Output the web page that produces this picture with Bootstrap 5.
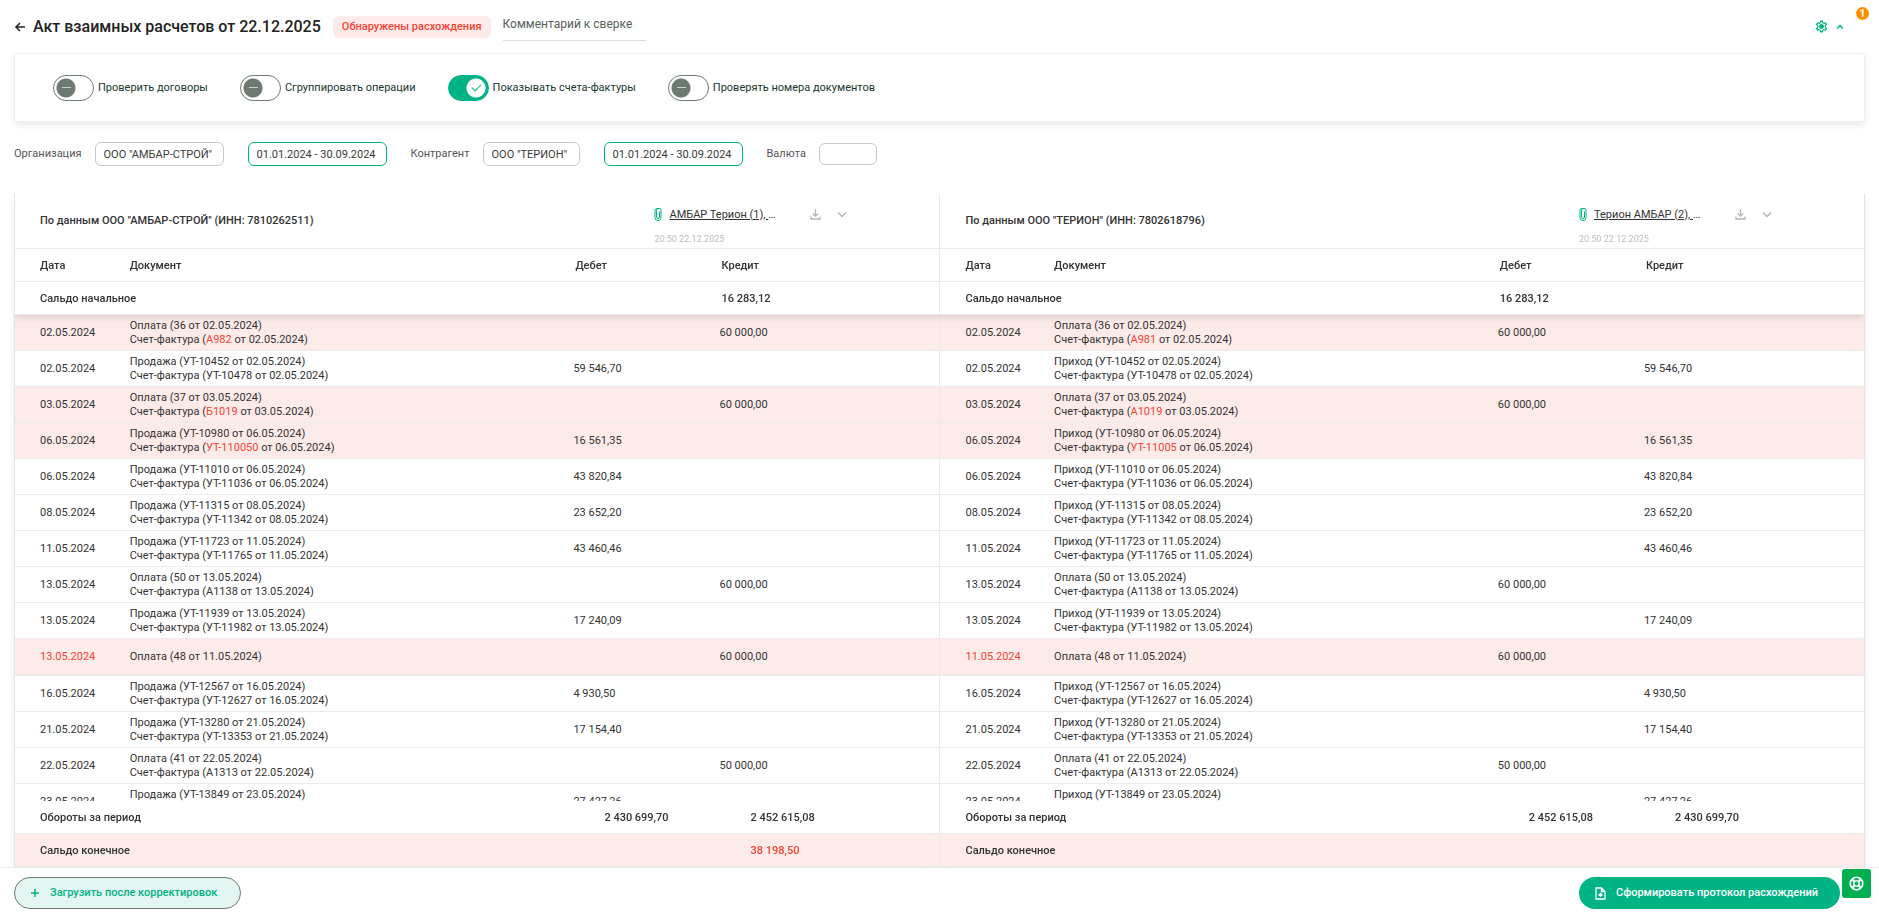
<!DOCTYPE html>
<html lang="ru">
<head>
<meta charset="utf-8">
<meta name="viewport" content="width=device-width, initial-scale=1">
<title>Акт взаимных расчетов</title>
<link rel="stylesheet" href="https://cdn.jsdelivr.net/npm/bootstrap@5.3.0/dist/css/bootstrap.min.css">
<style>
:root { --green: #00b383; --red: #f44336; --pink: #fdebe9; --line: #ebebeb; --ink: #333; }
body { font-family: Roboto, "Noto Sans", sans-serif; font-size: 11px; line-height: 14px; color: var(--ink); }
.page-head { height: 53px; padding: 0 35px 0 14px; }
.page-title { font-size: 16px; line-height: 20px; font-weight: 500; margin: 0 12px 0 7px; color: #222; }
.status-tag { background: var(--pink); color: var(--red); font-weight: 500; line-height: 22px; border-radius: 6px; padding: 0 9px; }
.note-input { width: 143px; height: 28px; margin-left: 12px; border: 0; border-bottom: 1px solid #ddd; padding: 0 0 4px; font-size: 12px; color: #4d5652; outline: 0; }
.note-input::placeholder { color: #56605b; opacity: 1; }
.alert-dot { position: absolute; top: 7px; right: 10px; width: 13px; height: 13px; border-radius: 50%; background: #ff8f00; color: #fff; font-weight: 700; line-height: 13px; text-align: center; }
.options-bar { margin: 0 14px; height: 69px; padding: 0 38px; border: 1px solid #eee; border-radius: 3px; box-shadow: 0 3px 6px rgba(0,0,0,.09); gap: 32px; }
.options-bar label { color: #17372b; margin: 0; cursor: pointer; }
.toggle-box { appearance: none; width: 41px; height: 26px; margin: 0 4px 0 0; border: 1px solid #6c7a72; border-radius: 13px; background: radial-gradient(circle at 12px 12px, #6c7a72 9px, transparent 10px); position: relative; flex: none; }
.toggle-box::after { content: ""; position: absolute; left: 8px; top: 11px; width: 9px; height: 1px; background: #c8d2cc; }
.toggle-box:checked { border-color: var(--green); background: radial-gradient(circle at 27px 12px, #fff 9px, var(--green) 10px); }
.toggle-box:checked::after { left: 23px; top: 8px; width: 9px; height: 5px; background: none; border: solid var(--green); border-width: 0 0 1px 1px; transform: rotate(-45deg); }
.filters { padding: 20px 14px 0; height: 72px; }
.filters label { color: #555; margin-right: 13px; }
.filter-box { height: 24px; border: 1px solid #c8c8d0; border-radius: 6px; padding: 0 8px; font-size: 11px; color: #3a3a3a; margin-right: 24px; background: #fff; }
.filter-box.period { border-color: var(--green); }
.w-org { width: 129px; } .w-period { width: 139px; } .w-agent { width: 97px; } .w-cur { width: 58px; height: 22px; }
.act-wrap { flex: 1 1 0; min-height: 0; margin: 0 14px; overflow-y: auto; scrollbar-width: none; border: solid #e4e4e4; border-width: 0 1px; box-shadow: 0 6px 6px rgba(0,0,0,.09); }
.act-wrap::-webkit-scrollbar { display: none; }
.act-table { width: 100%; table-layout: fixed; border-collapse: separate; border-spacing: 0; }
.act-table th, .act-table td { padding: 0; border-bottom: 1px solid var(--line); background: #fff; text-align: left; vertical-align: middle; }
.act-table thead, .act-table tfoot { position: sticky; z-index: 2; font-weight: 500; }
.act-table thead { top: 0; box-shadow: 0 3px 6px rgba(0,0,0,.12); }
.act-table tfoot { bottom: 0; }
.act-table th { font-weight: 500; }
.act-table .edge { padding-left: 25px; }
.act-table .rside { border-left: 1px solid var(--line); }
.act-table tbody td { height: 36px; }
.act-table tbody .lone td { height: 37px; }
.act-table tbody .diff td, .act-table tfoot .diff td, .act-table tfoot .diff th { background: var(--pink); }
.act-table .short th, .act-table .short td { height: 33px; padding-top: 2px; }
.act-table thead .sum { padding-left: 2px; }
.act-table tfoot .sum { padding-left: 31px; }
.act-table .side-head { height: 55px; }
.bad { color: var(--red); }
.file-box { width: 285px; padding-top: 10px; }
.file-link { width: 109px; color: #333; text-decoration: none; margin-left: 7px; font-weight: 400; white-space: nowrap; }
.file-time { font-size: 9px; line-height: 12px; font-weight: 400; color: #bdbdbd; margin-top: 11px; }
.bare-btn { border: 0; background: none; padding: 0; line-height: 0; color: #b5b5b5; }
.tools-btn { color: var(--green); }
.foot-bar { height: 49px; border-top: 1px solid var(--line); padding: 2px 39px 0 14px; background: #fff; z-index: 3; }
.pill { height: 32px; border-radius: 16px; font-size: 11px; line-height: 14px; font-weight: 500; }
.pill-light { background: #e4f6f1; color: var(--green); border: 1px solid #6c7a72; padding: 0 23px 0 15px; }
.pill-solid { background: var(--green); color: #fff; border: 0; padding: 0 22px 0 16px; }
.pill svg { margin-right: 10px; }
.help-btn { position: absolute; z-index: 4; right: 8px; bottom: 18px; width: 29px; height: 29px; border: 0; padding: 0; border-radius: 3px; background: #00b050; line-height: 0; }
</style>
</head>
<body>
<main class="d-flex flex-column vh-100 position-relative overflow-hidden">
  <header class="page-head d-flex align-items-center flex-shrink-0">
    <button class="bare-btn text-dark" type="button" aria-label="Назад"><svg width="12" height="12" viewBox="0 0 12 12" fill="none" stroke="currentColor" stroke-width="1.6"><path d="M11 6H2M6 2L2 6l4 4"/></svg></button>
    <h1 class="page-title">Акт взаимных расчетов от 22.12.2025</h1>
    <span class="status-tag">Обнаружены расхождения</span>
    <input class="note-input" type="text" placeholder="Комментарий к сверке" aria-label="Комментарий к сверке">
    <button class="bare-btn tools-btn ms-auto d-flex align-items-center gap-2" type="button" aria-label="Настройки">
      <svg width="13" height="13" viewBox="0 0 24 24" fill="currentColor"><path fill-rule="evenodd" d="M9.500 1h5l.6 3 1.900 1.100 2.900-1 2.500 4.300L20.100 10.900v2.200l2.300 2.500-2.500 4.300-2.900-1-1.900 1.100-.6 3h-5l-.6-3L7 18.900l-2.900 1-2.500-4.300 2.300-2.500v-2.200L1.600 8.400l2.500-4.300 2.900 1L8.900 4zM11.200 3.500l-.5 2.200L7.500 7.500l-2.300-.6-.8 1.300L6 10v4l-1.600 1.800.8 1.300 2.300-.6 3.200 1.800.5 2.200h1.600l.5-2.200 3.200-1.800 2.300.6.8-1.300L18 14v-4l1.600-1.800-.8-1.300-2.300.6-3.200-1.800-.5-2.200z"/><circle cx="12" cy="12" r="4.500"/></svg>
      <svg width="8" height="6" viewBox="0 0 8 6" fill="none" stroke="currentColor" stroke-width="1.500"><path d="M1 4.500L4 1.500l3 3"/></svg>
    </button>
    <span class="alert-dot">1</span>
  </header>

  <section class="options-bar d-flex align-items-center flex-shrink-0">
    <div class="d-flex align-items-center"><input class="toggle-box" type="checkbox" id="o1"><label for="o1">Проверить договоры</label></div>
    <div class="d-flex align-items-center"><input class="toggle-box" type="checkbox" id="o2"><label for="o2">Сгруппировать операции</label></div>
    <div class="d-flex align-items-center"><input class="toggle-box" type="checkbox" id="o3" checked><label for="o3">Показывать счета-фактуры</label></div>
    <div class="d-flex align-items-center"><input class="toggle-box" type="checkbox" id="o4"><label for="o4">Проверять номера документов</label></div>
  </section>

  <section class="filters d-flex align-items-start flex-shrink-0">
    <div class="d-flex align-items-center">
      <label for="org">Организация</label><input id="org" class="filter-box w-org" value='ООО "АМБАР-СТРОЙ"'>
      <input class="filter-box period w-period" aria-label="Период организации" value="01.01.2024 - 30.09.2024">
      <label for="agent">Контрагент</label><input id="agent" class="filter-box w-agent" value='ООО "ТЕРИОН"'>
      <input class="filter-box period w-period" aria-label="Период контрагента" value="01.01.2024 - 30.09.2024">
      <label for="cur">Валюта</label><input id="cur" class="filter-box w-cur" value="">
    </div>
  </section>

  <div class="act-wrap">
    <table class="act-table">
      <colgroup><col style="width:6.2%"><col style="width:24%"><col style="width:7.9%"><col style="width:11.9%"><col style="width:6.2%"><col style="width:24%"><col style="width:7.9%"><col style="width:11.9%"></colgroup>
      <thead>
        <tr>
          <th class="side-head edge" colspan="4"><div class="d-flex align-items-center"><span class="flex-grow-1">По данным ООО "АМБАР-СТРОЙ" (ИНН: 7810262511)</span><div class="file-box" data-file="АМБАР Терион (1), "></div></div></th>
          <th class="side-head edge rside" colspan="4"><div class="d-flex align-items-center"><span class="flex-grow-1">По данным ООО "ТЕРИОН" (ИНН: 7802618796)</span><div class="file-box" data-file="Терион АМБАР (2), "></div></div></th>
        </tr>
        <tr class="short"><th class="edge">Дата</th><th>Документ</th><th class="sum">Дебет</th><th class="sum">Кредит</th><th class="edge rside">Дата</th><th>Документ</th><th class="sum">Дебет</th><th class="sum">Кредит</th></tr>
        <tr class="short"><th class="edge" colspan="2">Сальдо начальное</th><td></td><td class="sum">16 283,12</td><th class="edge rside" colspan="2">Сальдо начальное</th><td class="sum">16 283,12</td><td></td></tr>
      </thead>
      <tbody id="rows"></tbody>
      <tfoot>
        <tr class="short"><th class="edge" colspan="2">Обороты за период</th><td class="sum">2 430 699,70</td><td class="sum">2 452 615,08</td><th class="edge rside" colspan="2">Обороты за период</th><td class="sum">2 452 615,08</td><td class="sum">2 430 699,70</td></tr>
        <tr class="short diff"><th class="edge" colspan="2">Сальдо конечное</th><td></td><td class="sum bad">38 198,50</td><th class="edge rside" colspan="2">Сальдо конечное</th><td></td><td></td></tr>
      </tfoot>
    </table>
  </div>

  <footer class="foot-bar position-relative d-flex align-items-center justify-content-between flex-shrink-0">
    <button class="pill pill-light d-flex align-items-center" type="button"><svg width="10" height="10" viewBox="0 0 10 10" stroke="currentColor" stroke-width="1.500"><path d="M5 1v8M1 5h8"/></svg>Загрузить после корректировок</button>
    <button class="pill pill-solid d-flex align-items-center" type="button"><svg width="11" height="13" viewBox="0 0 11 13" fill="none" stroke="currentColor" stroke-width="1.300"><path d="M1 1h5.500L10 4.500V12H1zM6.500 1v3.500H10M5.500 10V6.500M3.500 8.500l2-2 2 2"/></svg>Сформировать протокол расхождений</button>
  </footer>
  <button class="help-btn" type="button" aria-label="Помощь"><svg width="15" height="15" viewBox="0 0 16 16" fill="none" stroke="#fff"><circle cx="8" cy="8" r="6.700" stroke-width="1.800"/><circle cx="8" cy="8" r="2.800" stroke-width="1.500"/><path d="M3.500 3.500L6 6m4 4l2.500 2.500m0-9L10 6m-4 4l-2.500 2.500" stroke-width="2.400"/></svg></button>
</main>
<script src="https://cdn.jsdelivr.net/npm/bootstrap@5.3.0/dist/js/bootstrap.bundle.min.js"></script>
<script>
// date, sale?, number, invoice left, invoice right, amount, has difference, document date on the right
const ops = [
  ['02.05.2024', 0, '36', 'А982', 'А981', '60 000,00', 1],
  ['02.05.2024', 1, 'УТ-10452', 'УТ-10478', 'УТ-10478', '59 546,70', 0],
  ['03.05.2024', 0, '37', 'Б1019', 'А1019', '60 000,00', 1],
  ['06.05.2024', 1, 'УТ-10980', 'УТ-110050', 'УТ-11005', '16 561,35', 1],
  ['06.05.2024', 1, 'УТ-11010', 'УТ-11036', 'УТ-11036', '43 820,84', 0],
  ['08.05.2024', 1, 'УТ-11315', 'УТ-11342', 'УТ-11342', '23 652,20', 0],
  ['11.05.2024', 1, 'УТ-11723', 'УТ-11765', 'УТ-11765', '43 460,46', 0],
  ['13.05.2024', 0, '50', 'А1138', 'А1138', '60 000,00', 0],
  ['13.05.2024', 1, 'УТ-11939', 'УТ-11982', 'УТ-11982', '17 240,09', 0],
  ['13.05.2024', 0, '48', '', '', '60 000,00', 1, '11.05.2024'],
  ['16.05.2024', 1, 'УТ-12567', 'УТ-12627', 'УТ-12627', '4 930,50', 0],
  ['21.05.2024', 1, 'УТ-13280', 'УТ-13353', 'УТ-13353', '17 154,40', 0],
  ['22.05.2024', 0, '41', 'А1313', 'А1313', '50 000,00', 0],
  ['23.05.2024', 1, 'УТ-13849', 'УТ-13902', 'УТ-13902', '27 427,26', 0]
];
const side = (op, right) => {
  const [date, sale, num, invL, invR, sum, , other] = op;
  const inv = right ? invR : invL;
  const kind = sale ? (right ? 'Приход' : 'Продажа') : 'Оплата';
  const code = invL !== invR ? `<span class="bad">${inv}</span>` : inv;
  const doc = `${kind} (${num} от ${other || date})` + (inv ? `<br>Счет-фактура (${code} от ${date})` : '');
  const debit = Boolean(sale) !== right;
  return `<td class="edge${right ? ' rside' : ''}${other ? ' bad' : ''}">${right && other || date}</td><td>${doc}</td>` +
    `<td>${debit ? sum : ''}</td><td>${debit ? '' : sum}</td>`;
};
// For a payment the left side shows credit and the right side debit; for a sale it is the reverse.
document.getElementById('rows').innerHTML = ops.map(op =>
  `<tr class="${op[6] ? 'diff' : ''}${op[3] ? '' : ' lone'}">${side(op, false)}${side(op, true)}</tr>`).join('');

document.querySelectorAll('.file-box').forEach(box => {
  box.innerHTML = `<div class="d-flex align-items-center">
    <svg width="8" height="13" viewBox="0 0 8 13" fill="none" stroke="#00b383" stroke-width="1"><path d="M5.500 3.500v5.500a1.500 1.500 0 0 1-3 0V2.500a2 2 0 0 1 4.500-.2v7.200a3 3 0 0 1-6 0V2.500a2 2 0 0 1 2-2h2"/></svg>
    <a class="file-link" href="#"><u>${box.dataset.file}</u>…</a>
    <button class="bare-btn ms-4 ps-2" type="button" aria-label="Скачать"><svg width="11" height="11" viewBox="0 0 11 11" fill="none" stroke="currentColor" stroke-width="1.300"><path d="M5.500 0v7M2.800 4.500l2.700 2.700 2.700-2.700M1 7.500V10h9V7.500"/></svg></button>
    <button class="bare-btn ms-3" type="button" aria-label="Подробнее"><svg width="10" height="7" viewBox="0 0 10 7" fill="none" stroke="currentColor" stroke-width="1.400"><path d="M1 1.500l4 4 4-4"/></svg></button>
  </div><div class="file-time">20:50 22.12.2025</div>`;
});
</script>
</body>
</html>
